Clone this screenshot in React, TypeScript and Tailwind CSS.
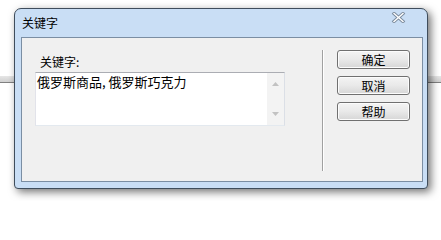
import React from 'react';

const cjk = { fontFamily: '"Noto Sans CJK SC", "Liberation Sans", sans-serif' };

const DialogButton: React.FC<{ label: string }> = ({ label }) => (
  <button
    type="button"
    className="w-[73px] h-[19px] rounded-[3px] border border-[#707070] bg-gradient-to-b from-[#f4f4f4] via-[#e9e9e9] to-[#d6d6d6] text-[12px] leading-[17px] text-black shadow-[inset_0_0_0_1px_#fcfcfc]"
    style={cjk}
  >
    {label}
  </button>
);

const CloseIcon: React.FC = () => (
  <svg width="15" height="11" viewBox="0 0 15 11" className="mt-[3px]">
    <path d="M3 1.5 L12 9.5 M12 1.5 L3 9.5" stroke="#7a8a9c" strokeWidth="3.2" strokeLinecap="square" />
    <path d="M3 1.5 L12 9.5 M12 1.5 L3 9.5" stroke="#ffffff" strokeWidth="1.4" strokeLinecap="square" />
  </svg>
);

const Arrow: React.FC<{ up?: boolean }> = ({ up }) => (
  <svg width="7" height="4" viewBox="0 0 7 4">
    <path d={up ? 'M0 4 L3.5 0 L7 4 Z' : 'M0 0 L3.5 4 L7 0 Z'} fill="#c2c2c2" />
  </svg>
);

export default function App() {
  return (
    <div className="relative w-[441px] h-[201px] bg-white overflow-hidden">
      {/* background behind the dialog */}
      <div className="mt-[76px] h-[7px] bg-gradient-to-b from-[#e6e6e6] to-[#d0d0d0] border-b border-[#808080]" />

      {/* dialog window */}
      <div className="absolute left-[14px] top-[8px] w-[414px] h-[181px] rounded-t-[7px] rounded-b-[4px] border border-[#3f4d5c] bg-[#c9def5] shadow-[3px_3px_8px_rgba(0,0,0,0.55)] flex flex-col">
        <div className="h-[28px] flex items-start justify-between pl-[7px] pr-[21px]">
          <span className="mt-[7px] text-[12px] leading-[14px] text-black" style={cjk}>关键字</span>
          <CloseIcon />
        </div>

        <div className="ml-[6px] mr-[4px] mb-[6px] flex-1 border border-[#7b8ea3] bg-[#f0f0f0] flex">
          <div className="ml-[13px] w-[250px] flex flex-col">
            <span className="mt-[17px] ml-[5px] h-[17px] text-[12px] leading-[14px] text-black" style={cjk}>关键字:</span>
            <div className="h-[54px] border border-[#abadb3] border-r-[#dbdfe6] border-b-[#e3e9ef] border-l-[#e2e3ea] bg-white flex">
              <div className="flex-1 pl-[1px] pt-[1px] text-[13px] leading-[15px] text-black" style={cjk}>
                俄罗斯商品, 俄罗斯巧克力
              </div>
              <div className="w-[17px] bg-[#f3f3f3] flex flex-col items-center justify-between py-[9px]">
                <Arrow up />
                <Arrow />
              </div>
            </div>
          </div>

          <div className="ml-[37px] mt-[12px] h-[121px] w-[2px] border-l border-[#a0a0a0] bg-white" />

          <div className="ml-[13px] mt-[12px] flex flex-col gap-[7px]">
            <DialogButton label="确定" />
            <DialogButton label="取消" />
            <DialogButton label="帮助" />
          </div>
        </div>
      </div>
    </div>
  );
}
